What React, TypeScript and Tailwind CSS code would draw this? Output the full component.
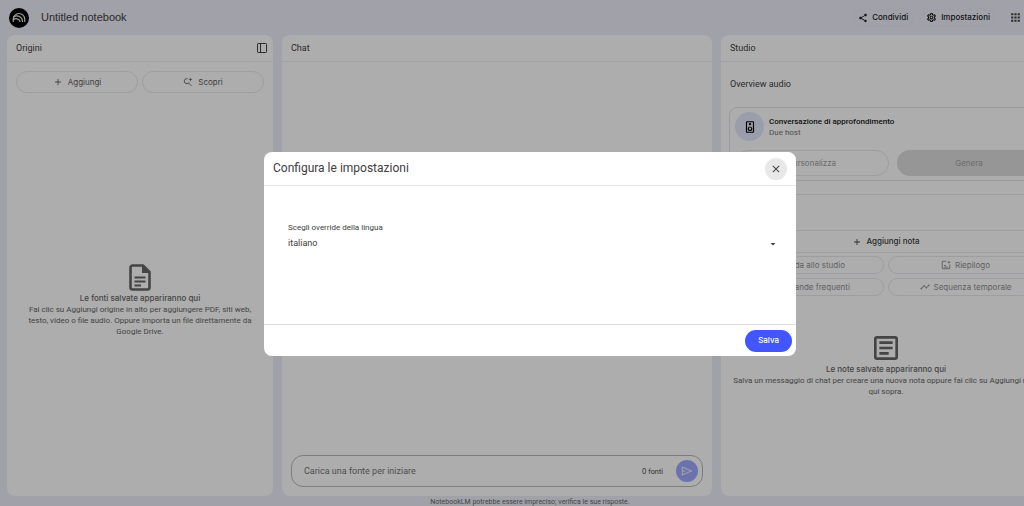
import type { ReactNode } from "react";
import {
  MdAdd,
  MdApps,
  MdArrowDropDown,
  MdClose,
  MdHelpOutline,
  MdOutlineArticle,
  MdOutlineSettings,
  MdOutlineSpeaker,
  MdShare,
  MdTimeline,
} from "react-icons/md";

function Logo() {
  return (
    <svg viewBox="0 0 40 40" className="size-5 shrink-0" aria-hidden="true">
      <circle cx="20" cy="20" r="20" fill="#000" />
      <g fill="none" stroke="#e8e8e8" strokeWidth="2.4" strokeLinecap="round">
        <path d="M8.500 27v-4.500a11.500 11.500 0 0 1 23 0V27" />
        <path d="M9 18.500a11 11 0 0 1 18 8.500" />
        <path d="M9 23.500a8 8 0 0 1 13 3.500" />
      </g>
    </svg>
  );
}

function DiscoverIcon() {
  return (
    <svg viewBox="0 0 24 24" className="size-[10px]" fill="none" stroke="currentColor" strokeWidth="2.2" aria-hidden="true">
      <path d="M11 4H9a6 6 0 1 0 5.500 8.500M13 14l7 7" />
      <path d="M18 1l1.300 3.700L23 6l-3.700 1.300L18 11l-1.300-3.700L13 6l3.700-1.300z" fill="currentColor" stroke="none" />
    </svg>
  );
}

function DockIcon() {
  return (
    <svg viewBox="0 0 20 20" className="size-[10px]" fill="none" stroke="currentColor" strokeWidth="2" aria-hidden="true">
      <rect x="1" y="1" width="18" height="18" rx="1.500" />
      <path d="M7 1v18" />
    </svg>
  );
}

function SendIcon() {
  return (
    <svg viewBox="0 0 24 24" className="size-[14px]" fill="currentColor" aria-hidden="true">
      <path d="M3 20V4l19 8zm2-3 11.850-5L5 7v3.500l6 1.500-6 1.500z" />
    </svg>
  );
}

function SourceIcon() {
  return (
    <svg viewBox="0 0 22 27" className="h-[27px] w-[22px]" aria-hidden="true">
      <path
        d="M3 1.500h11L20.500 8v15.500a2 2 0 0 1-2 2H3.500a2 2 0 0 1-2-2V3.500a2 2 0 0 1 2-2z"
        fill="none"
        stroke="currentColor"
        strokeWidth="2.600"
      />
      <path d="M13 1h1.500L21 7.500V9h-8zM5.500 12.500h11v2h-11zM5.500 16.500h11v2h-11zM5.500 20.500h6.500v2H5.500z" fill="currentColor" />
    </svg>
  );
}

function BriefIcon() {
  return (
    <svg viewBox="0 0 24 24" className="size-[10px]" fill="none" stroke="currentColor" strokeWidth="2.200" aria-hidden="true">
      <path d="M13 3H3v18h18V11M7 17h10M7 13h5" />
      <path d="M19 1l1.200 3.300L23.500 5.500l-3.300 1.200L19 10l-1.200-3.300-3.300-1.200 3.300-1.200z" fill="currentColor" stroke="none" />
    </svg>
  );
}

function Panel({ title, action, className, children }: { title: string; action?: ReactNode; className: string; children?: ReactNode }) {
  return (
    <section className={`flex flex-col rounded-lg bg-white ${className}`}>
      <header className="flex h-[27px] shrink-0 items-center justify-between border-b border-[#eeeff4] pr-[6px] pl-[9px]">
        <h2 className="text-[9px]">{title}</h2>
        {action}
      </header>
      {children}
    </section>
  );
}

function PillButton({ icon, children, className }: { icon?: ReactNode; children: ReactNode; className: string }) {
  return (
    <button type="button" className={`flex items-center justify-center rounded-full border border-[#e8e9ee] ${className}`}>
      {icon}
      {children}
    </button>
  );
}

export default function App() {
  return (
    <div className="h-screen overflow-hidden bg-[#edeefa] font-['Roboto','Liberation_Sans',sans-serif] text-[8px] leading-[11px] text-[#404040]">
      <div className="flex h-full flex-col">
        <header className="flex h-[35px] shrink-0 items-center pr-[2px] pl-[9px]">
          <Logo />
          <h1 className="ml-3 font-['Liberation_Sans',sans-serif] text-[11px]">Untitled notebook</h1>
          <nav className="ml-auto flex items-center font-['Inter',sans-serif] font-medium text-[#202020]">
            <button type="button" className="mr-2 flex h-[18px] items-center gap-1 rounded-full border border-[#e8eaf5] px-1">
              <MdShare className="size-[10px]" />
              Condividi
            </button>
            <button type="button" className="mr-[14px] flex h-[18px] items-center gap-1 rounded-full border border-[#e8eaf5] px-1">
              <MdOutlineSettings className="size-[11px] text-black" />
              Impostazioni
            </button>
            <button type="button" aria-label="App" className="text-[#404040]">
              <MdApps className="size-[13px]" />
            </button>
          </nav>
        </header>

        <main className="-mr-[27px] flex min-h-0 flex-1 gap-[9px] pl-[7px]">
          <Panel
            title="Origini"
            className="w-[266px] shrink-0"
            action={
              <button type="button" aria-label="Comprimi pannello">
                <DockIcon />
              </button>
            }
          >
            <div className="flex gap-1 px-[9px] pt-[9px] font-['Inter',sans-serif] text-[#606060]">
              <PillButton className="h-[22px] flex-1 gap-[5px]" icon={<MdAdd className="size-[10px]" />}>
                Aggiungi
              </PillButton>
              <PillButton className="h-[22px] flex-1 gap-[5px]" icon={<DiscoverIcon />}>
                Scopri
              </PillButton>
            </div>
            <div className="mt-[171px] flex flex-col items-center px-4 text-center text-[#666666]">
              <SourceIcon />
              <h3 className="mt-[2px] font-['Inter',sans-serif] font-medium">Le fonti salvate appariranno qui</h3>
              <p>
                Fai clic su Aggiungi origine in alto per aggiungere PDF, siti web, testo, video o file audio. Oppure importa
                un file direttamente da Google Drive.
              </p>
            </div>
          </Panel>

          <Panel title="Chat" className="min-w-0 flex-1">
            <div className="mx-[9px] mt-auto mb-[9px] flex h-8 items-center rounded-xl border border-[#b8b8bb] pr-1 pl-3">
              <input
                aria-label="Messaggio"
                placeholder="Carica una fonte per iniziare"
                className="min-w-0 flex-1 bg-transparent text-[9px] outline-none placeholder:text-[#757575]"
              />
              <span className="mr-[13px] font-['Inter',sans-serif] text-[7px]">0 fonti</span>
              <button type="button" aria-label="Invia" className="flex size-[22px] items-center justify-center rounded-full bg-[#a0a9ff] text-[#e4e6ff]">
                <SendIcon />
              </button>
            </div>
          </Panel>

          <Panel title="Studio" className="w-[330px] shrink-0">
            <h3 className="mt-[17px] ml-[9px] text-[9px]">Overview audio</h3>
            <div className="mt-[17px] mr-[9px] ml-[8px] rounded-lg border border-[#e4e5ea] pt-1 pb-1 pl-[5px]">
              <div className="flex items-center gap-[5px]">
                <span className="flex size-[29px] items-center justify-center rounded-full bg-[#e4e9fb] text-black">
                  <MdOutlineSpeaker className="size-[14px]" />
                </span>
                <div>
                  <h4 className="font-medium text-[#202020]">Conversazione di approfondimento</h4>
                  <p className="text-[#757575]">Due host</p>
                </div>
              </div>
              <div className="mt-[9px] flex gap-2 font-['Inter',sans-serif] text-[#a0a0a0]">
                <PillButton className="h-[26px] w-[154px]">Personalizza</PillButton>
                <button type="button" className="h-[26px] flex-1 rounded-full bg-[#dedede]">
                  Genera
                </button>
              </div>
            </div>
            <hr className="mt-[13px] border-[#e8e9ee]" />
            <h3 className="mt-[13px] ml-[9px] text-[9px]">Note</h3>
            <div className="mt-[11px] px-[8px] font-['Inter',sans-serif]">
              <PillButton className="h-[23px] w-full gap-1 font-medium" icon={<MdAdd className="size-[10px]" />}>
                Aggiungi nota
              </PillButton>
              <div className="mt-[3px] grid grid-cols-2 gap-1 text-[#8f8f93]">
                <PillButton className="h-[18px] gap-1" icon={<MdOutlineArticle className="size-[10px]" />}>
                  Guida allo studio
                </PillButton>
                <PillButton className="h-[18px] gap-1" icon={<BriefIcon />}>
                  Riepilogo
                </PillButton>
                <PillButton className="h-[18px] gap-1" icon={<MdHelpOutline className="size-[10px]" />}>
                  Domande frequenti
                </PillButton>
                <PillButton className="h-[18px] gap-1" icon={<MdTimeline className="size-[10px]" />}>
                  Sequenza temporale
                </PillButton>
              </div>
            </div>
            <div className="mt-9 flex flex-col items-center px-[9px] text-center text-[#666666]">
              <MdOutlineArticle className="size-8" />
              <h3 className="font-['Inter',sans-serif] font-medium">Le note salvate appariranno qui</h3>
              <p>Salva un messaggio di chat per creare una nuova nota oppure fai clic su Aggiungi nota qui sopra.</p>
            </div>
          </Panel>
        </main>
        <footer className="flex h-[10px] shrink-0 items-center justify-center pt-[3px] pl-9 text-[7px] text-[#666666]">
          NotebookLM potrebbe essere impreciso; verifica le sue risposte.
        </footer>
      </div>

      <div className="fixed inset-0 flex items-center justify-center bg-black/32 pt-[2px] pl-9">
        <div role="dialog" aria-labelledby="settings-title" className="w-[532px] rounded-lg bg-white">
          <header className="flex h-[34px] items-center justify-between border-b border-[#e8e8e8] px-[9px]">
            <h2 id="settings-title" className="text-[12px]">
              Configura le impostazioni
            </h2>
            <button type="button" aria-label="Chiudi" className="flex size-[22px] items-center justify-center rounded-full bg-[#e8e8e8]">
              <MdClose className="size-3" />
            </button>
          </header>
          <div className="h-[138px] px-6 pt-9">
            <label htmlFor="language" className="block">
              Scegli override della lingua
            </label>
            <div className="mt-1 grid items-center">
              <select id="language" className="col-start-1 row-start-1 h-[13px] w-full appearance-none bg-transparent text-[9px]">
                <option>italiano</option>
              </select>
              <MdArrowDropDown className="pointer-events-none col-start-1 row-start-1 mr-[-7px] size-3 justify-self-end" />
            </div>
          </div>
          <footer className="flex h-8 items-center justify-end border-t border-[#e0e0e0] pr-1">
            <button type="button" className="h-[22px] rounded-full bg-[#4255ff] px-[13px] font-['Inter',sans-serif] font-medium text-white">
              Salva
            </button>
          </footer>
        </div>
      </div>
    </div>
  );
}
